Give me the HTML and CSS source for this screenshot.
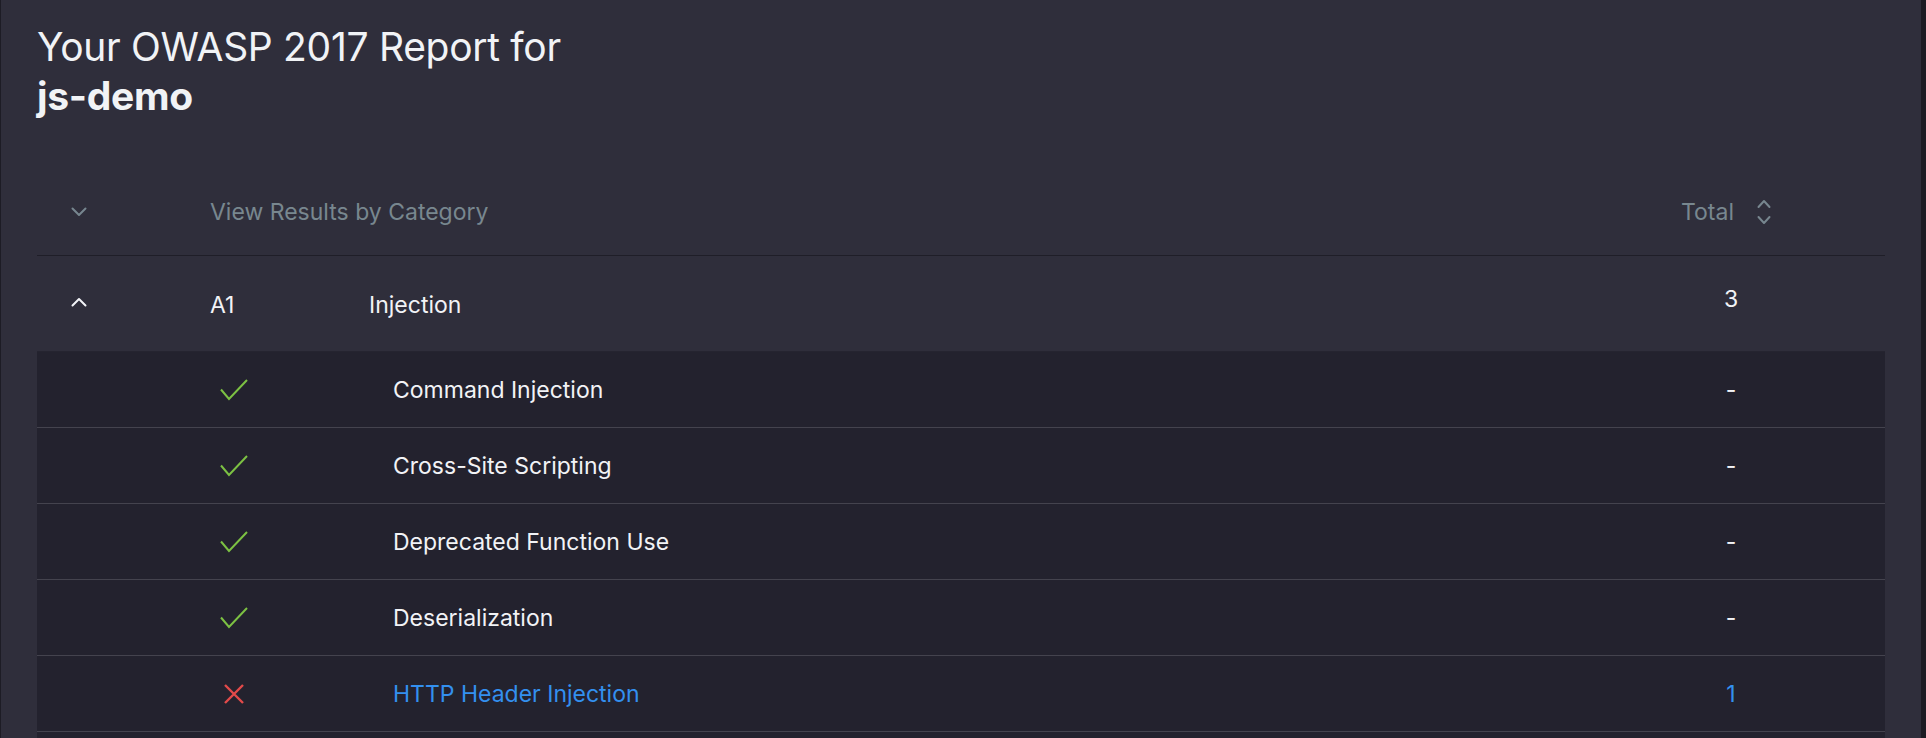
FILE: index.html
```html
<!DOCTYPE html>
<html lang="en">
<head>
<meta charset="utf-8">
<title>OWASP 2017 Report</title>
<link rel="stylesheet" href="styles.css">
</head>
<body>
<div class="page">
  <h1 class="title">Your OWASP 2017 Report for<br><strong class="project">js-demo</strong></h1>

  <div class="table">
    <div class="row head-row">
      <div class="c-toggle">
        <svg class="chev" width="16" height="10" viewBox="0 0 16 10"><polyline points="1.5,1.5 8,8 14.5,1.5" fill="none" stroke="#77868f" stroke-width="2" stroke-linecap="round" stroke-linejoin="round"/></svg>
      </div>
      <div class="c-label">View Results by Category</div>
      <div class="c-total">
        <span class="total-label">Total</span>
        <svg class="sort" width="14" height="26" viewBox="0 0 14 26"><polyline points="1.5,8 7,2 12.5,8" fill="none" stroke="#77868f" stroke-width="2" stroke-linecap="round" stroke-linejoin="round"/><polyline points="1.5,18 7,24 12.5,18" fill="none" stroke="#77868f" stroke-width="2" stroke-linecap="round" stroke-linejoin="round"/></svg>
      </div>
    </div>

    <div class="row cat-row">
      <div class="c-toggle">
        <svg class="chev chev-up" width="16" height="10" viewBox="0 0 16 10"><polyline points="1.5,8.5 8,2 14.5,8.5" fill="none" stroke="#f3f4f7" stroke-width="2" stroke-linecap="round" stroke-linejoin="round"/></svg>
      </div>
      <div class="c-code">A1</div>
      <div class="c-name">Injection</div>
      <div class="c-value"><span class="val val-cat">3</span></div>
    </div>

    <div class="children">
      <div class="row child-row">
        <div class="c-toggle"></div>
        <div class="c-status"><svg width="28" height="22" viewBox="0 0 28 22"><polyline points="1,10.5 9,20 27,1" fill="none" stroke="#7cc143" stroke-width="2"/></svg></div>
        <div class="c-name child-name">Command Injection</div>
        <div class="c-value"><span class="val">-</span></div>
      </div>
      <div class="row child-row">
        <div class="c-toggle"></div>
        <div class="c-status"><svg width="28" height="22" viewBox="0 0 28 22"><polyline points="1,10.5 9,20 27,1" fill="none" stroke="#7cc143" stroke-width="2"/></svg></div>
        <div class="c-name child-name">Cross-Site Scripting</div>
        <div class="c-value"><span class="val">-</span></div>
      </div>
      <div class="row child-row">
        <div class="c-toggle"></div>
        <div class="c-status"><svg width="28" height="22" viewBox="0 0 28 22"><polyline points="1,10.5 9,20 27,1" fill="none" stroke="#7cc143" stroke-width="2"/></svg></div>
        <div class="c-name child-name">Deprecated Function Use</div>
        <div class="c-value"><span class="val">-</span></div>
      </div>
      <div class="row child-row">
        <div class="c-toggle"></div>
        <div class="c-status"><svg width="28" height="22" viewBox="0 0 28 22"><polyline points="1,10.5 9,20 27,1" fill="none" stroke="#7cc143" stroke-width="2"/></svg></div>
        <div class="c-name child-name">Deserialization</div>
        <div class="c-value"><span class="val">-</span></div>
      </div>
      <div class="row child-row">
        <div class="c-toggle"></div>
        <div class="c-status"><svg class="cross" width="22" height="22" viewBox="0 0 22 22"><path d="M2 2 L20 20 M20 2 L2 20" fill="none" stroke="#e24a4a" stroke-width="2.4"/></svg></div>
        <div class="c-name child-name link">HTTP Header Injection</div>
        <div class="c-value"><span class="val link">1</span></div>
      </div>
      <div class="child-rest"></div>
    </div>
  </div>
</div>
</body>
</html>
```

FILE: styles.css
```css
* { box-sizing: border-box; }

html, body {
  margin: 0;
  padding: 0;
  height: 100%;
  overflow: hidden;
  background: #2f2e3b;
}

body {
  font-family: "Inter", "Liberation Sans", sans-serif;
  color: #f2f3f6;
}

.page {
  height: 100%;
  border-left: 1px solid #1d1c25;
  border-right: 5px solid #1c1b23;
  padding: 22px 36px 0 36px;
}

.title {
  margin: 0 0 50px 0;
  font-size: 39px;
  line-height: 49px;
  font-weight: 400;
  letter-spacing: -0.3px;
  color: #f1f3f6;
}

.project {
  font-weight: 700;
}

.table {
  display: flex;
  flex-direction: column;
  font-size: 23px;
  line-height: 26px;
}

.row {
  display: grid;
  grid-template-columns: 173px 159px 1fr 204px;
  align-items: center;
}

.c-toggle {
  display: flex;
  align-items: center;
  padding-left: 34px;
}

.chev { display: block; }

.head-row {
  height: 86px;
  border-bottom: 1px solid #1f1e28;
  color: #78878f;
  padding-bottom: 2px;
}

.head-row .c-label {
  grid-column: 2 / 4;
}

.c-total {
  display: flex;
  align-items: center;
  gap: 23px;
}

.sort { display: block; }

.cat-row {
  height: 96px;
  border-bottom: 1px solid #252430;
  padding-top: 2px;
}

.chev-up {
  margin-bottom: 6px;
}

.c-value .val {
  display: inline-block;
  width: 100px;
  text-align: center;
}

.val-cat {
  margin-bottom: 12px;
}

.children {
  background: #23222e;
}

.child-row {
  height: 76px;
  border-bottom: 1px solid #44434e;
}

.c-status {
  display: flex;
  align-items: center;
  padding-left: 10px;
}

.c-status svg { display: block; }

.c-status .cross {
  margin-left: 3px;
}

.child-name {
  padding-left: 24px;
}

.link {
  color: #3390ef;
}

.child-rest {
  height: 8px;
}
```
